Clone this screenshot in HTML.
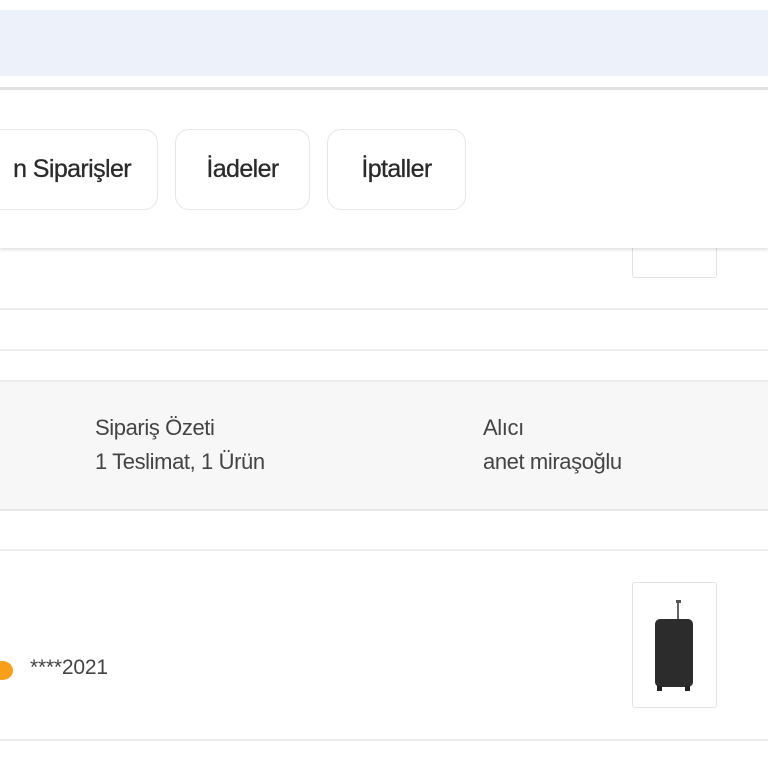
<!DOCTYPE html>
<html><head><meta charset="utf-8"><style>
*{margin:0;padding:0;box-sizing:border-box}
body{width:768px;height:768px;overflow:hidden;background:#fff;font-family:"Liberation Sans",sans-serif;color:#333;position:relative}
.a{position:absolute}
.btn{position:absolute;top:129px;height:81px;border:1px solid #e6e6e6;border-radius:14px;background:#fff;font-size:25px;letter-spacing:-0.6px;color:#2a2a2a;display:flex;align-items:center;justify-content:center;-webkit-text-stroke:0.3px #2a2a2a}
.t{position:absolute;font-size:22px;letter-spacing:-0.4px;color:#444;line-height:24px}
</style></head><body>
<div class="a" style="left:0;top:10px;width:768px;height:66px;background:#edf1fa"></div>
<div class="a" style="left:0;top:87px;width:768px;height:3px;background:#e2e2e2"></div>
<div class="a" style="left:632px;top:240px;width:85px;height:38px;border:1px solid #e3e3e3;border-radius:3px;background:#fff"></div>
<div class="a" style="left:0;top:90px;width:768px;height:158px;background:#fff;box-shadow:0 2px 3px rgba(0,0,0,.12)"></div>
<div class="btn" style="left:-30px;width:188px;justify-content:flex-end;padding-right:26px">n Siparişler</div>
<div class="btn" style="left:175px;width:135px">İadeler</div>
<div class="btn" style="left:327px;width:139px">İptaller</div>
<div class="a" style="left:0;top:308px;width:768px;height:2px;background:#ececec"></div>
<div class="a" style="left:0;top:349px;width:768px;height:2px;background:#ececec"></div>
<div class="a" style="left:0;top:380px;width:768px;height:131px;background:#f7f7f7;border-top:2px solid #ececec;border-bottom:2px solid #e8e8e8"></div>
<div class="t" style="left:95px;top:416px">Sipariş Özeti</div>
<div class="t" style="left:95px;top:450px">1 Teslimat, 1 Ürün</div>
<div class="t" style="left:483px;top:416px">Alıcı</div>
<div class="t" style="left:483px;top:450px">anet miraşoğlu</div>
<div class="a" style="left:0;top:549px;width:768px;height:2px;background:#ececec"></div>
<div class="a" style="left:0;top:739px;width:768px;height:2px;background:#ececec"></div>
<div class="a" style="left:-8px;top:661px;width:21px;height:19px;border-radius:50%;background:#f79e1b"></div>
<div class="t" style="left:30px;top:656px;font-size:21px;letter-spacing:-0.2px">****2021</div>
<div class="a" style="left:632px;top:582px;width:85px;height:126px;border:1px solid #e3e3e3;border-radius:3px;background:#fff">
<svg width="85" height="126" viewBox="0 0 85 126">
<rect x="44" y="19" width="2" height="20" fill="#666"/><rect x="43" y="17" width="5" height="3" fill="#555"/>
<rect x="22" y="36" width="38" height="68" rx="5" fill="#2c2c2c"/>
<rect x="24" y="103" width="5" height="5" fill="#222"/><rect x="52" y="103" width="5" height="5" fill="#222"/>
</svg></div>
</body></html>
